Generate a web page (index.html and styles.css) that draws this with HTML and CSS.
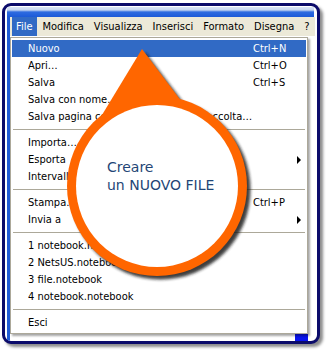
FILE: index.html
```html
<!DOCTYPE html>
<html lang="it">
<head>
<meta charset="utf-8">
<title>Nuovo file</title>
<link rel="stylesheet" href="styles.css">
</head>
<body>
<div class="frame">
  <div class="window">
    <div class="titlebar"></div>
    <div class="main">
      <div class="leftedge"></div>
      <div class="client">
        <nav class="menubar">
          <span class="mb-item active">File</span>
          <span class="mb-item">Modifica</span>
          <span class="mb-item">Visualizza</span>
          <span class="mb-item">Inserisci</span>
          <span class="mb-item">Formato</span>
          <span class="mb-item">Disegna</span>
          <span class="mb-item">?</span>
        </nav>
        <div class="doc"><div class="doc-block"></div></div>
      </div>
    </div>
  </div>
</div>

<ul class="dropdown">
  <li class="row hl"><span class="lbl">Nuovo</span><span class="sc">Ctrl+N</span></li>
  <li class="row"><span class="lbl">Apri…</span><span class="sc">Ctrl+O</span></li>
  <li class="row"><span class="lbl">Salva</span><span class="sc">Ctrl+S</span></li>
  <li class="row"><span class="lbl">Salva con nome…</span></li>
  <li class="row"><span class="lbl">Salva pagina come elemento della raccolta…</span></li>
  <li class="sep"></li>
  <li class="row"><span class="lbl">Importa…</span></li>
  <li class="row"><span class="lbl">Esporta</span><span class="sc"></span><span class="arrow"></span></li>
  <li class="row"><span class="lbl">Intervallo…</span></li>
  <li class="sep"></li>
  <li class="row"><span class="lbl">Stampa…</span><span class="sc">Ctrl+P</span></li>
  <li class="row"><span class="lbl">Invia a</span><span class="sc"></span><span class="arrow"></span></li>
  <li class="sep"></li>
  <li class="row"><span class="lbl">1 notebook.notebook</span></li>
  <li class="row"><span class="lbl">2 NetsUS.notebook</span></li>
  <li class="row"><span class="lbl">3 file.notebook</span></li>
  <li class="row"><span class="lbl">4 notebook.notebook</span></li>
  <li class="sep"></li>
  <li class="row"><span class="lbl">Esci</span></li>
</ul>

<div class="callout">
  <svg class="callout-shape" width="330" height="354" viewBox="0 0 330 354">
    <defs>
      <filter id="blur" x="-20%" y="-20%" width="140%" height="140%">
        <feGaussianBlur stdDeviation="1.6"/>
      </filter>
    </defs>
    <g transform="translate(3.5 3.5)" filter="url(#blur)" fill="#1a1a1a" opacity="0.85">
      <circle cx="157" cy="186" r="90"/>
      <polygon points="142,49 95.9,125 191.8,115"/>
    </g>
    <g fill="#ff6600">
      <circle cx="157" cy="186" r="90"/>
      <polygon points="142,49 95.9,125 191.8,115"/>
    </g>
    <circle cx="157" cy="186" r="81" fill="#ffffff"/>
  </svg>
  <p class="callout-text">Creare<br>un NUOVO FILE</p>
</div>
</body>
</html>
```

FILE: styles.css
```css
html, body {
  margin: 0;
  padding: 0;
  background: #ffffff;
}

body {
  position: relative;
  width: 330px;
  height: 354px;
  overflow: hidden;
  font-family: "DejaVu Sans Condensed", "Liberation Sans", sans-serif;
  font-size: 11px;
  color: #000;
}

.frame {
  box-sizing: border-box;
  margin: 3px 0 0 2px;
  width: 318px;
  height: 341px;
  border: 3px solid #0b0b6a;
  border-radius: 9px;
  padding: 1px 3px 0 2px;
  background: #ffffff;
  box-shadow: 3px 3px 3px rgba(0, 0, 0, 0.45);
  overflow: hidden;
}

.window {
  display: flex;
  flex-direction: column;
  height: 100%;
}

.titlebar {
  height: 10px;
  flex: none;
  background: linear-gradient(#d9e4f6 0, #c7d6f0 3px, #2e6be0 5px, #1c5ad8 10px);
}

.main {
  flex: 1;
  display: flex;
}

.leftedge {
  width: 3px;
  flex: none;
  background: #1f5bd6;
}

.client {
  flex: 1;
  display: flex;
  flex-direction: column;
}

.menubar {
  display: flex;
  height: 19px;
  padding-left: 2px;
  background: #ece9d8;
  align-items: stretch;
}

.mb-item {
  display: flex;
  align-items: center;
  padding: 0 5px;
}

.mb-item:first-child {
  padding-left: 4px;
}

.mb-item.active {
  background: #316ac5;
  color: #fff;
}

.doc {
  flex: 1;
  display: flex;
  align-items: flex-end;
  justify-content: flex-end;
  padding-right: 7px;
}

.doc-block {
  width: 13px;
  height: 8px;
  background: #0a14ee;
}

.dropdown {
  position: absolute;
  left: 10px;
  top: 37px;
  width: 298px;
  box-sizing: border-box;
  margin: 0;
  padding: 2px 1px 2px 1px;
  list-style: none;
  background: #ffffff;
  border: 1px solid #aca899;
  box-shadow: 2px 2px 2px rgba(0, 0, 0, 0.35);
}

.row {
  display: grid;
  grid-template-columns: 225px 44px 1fr;
  align-items: center;
  height: 17px;
  padding-left: 16px;
  white-space: nowrap;
}

.row.hl {
  background: #316ac5;
  color: #ffffff;
}

.lbl {
  overflow: hidden;
}

.arrow {
  width: 0;
  height: 0;
  border-left: 4px solid #000;
  border-top: 4px solid transparent;
  border-bottom: 4px solid transparent;
}

.sep {
  height: 9px;
  display: flex;
  align-items: center;
  padding: 0 1px;
}

.sep::before {
  content: "";
  flex: 1;
  height: 1px;
  background: #aca899;
}

.callout {
  position: absolute;
  left: 0;
  top: 0;
  width: 330px;
  height: 354px;
  pointer-events: none;
}

.callout-shape {
  display: block;
}

.callout-text {
  position: absolute;
  left: 107px;
  top: 158px;
  margin: 0;
  font-family: "DejaVu Sans", sans-serif;
  font-size: 14px;
  line-height: 18px;
  color: #1f4676;
  white-space: nowrap;
}
```
